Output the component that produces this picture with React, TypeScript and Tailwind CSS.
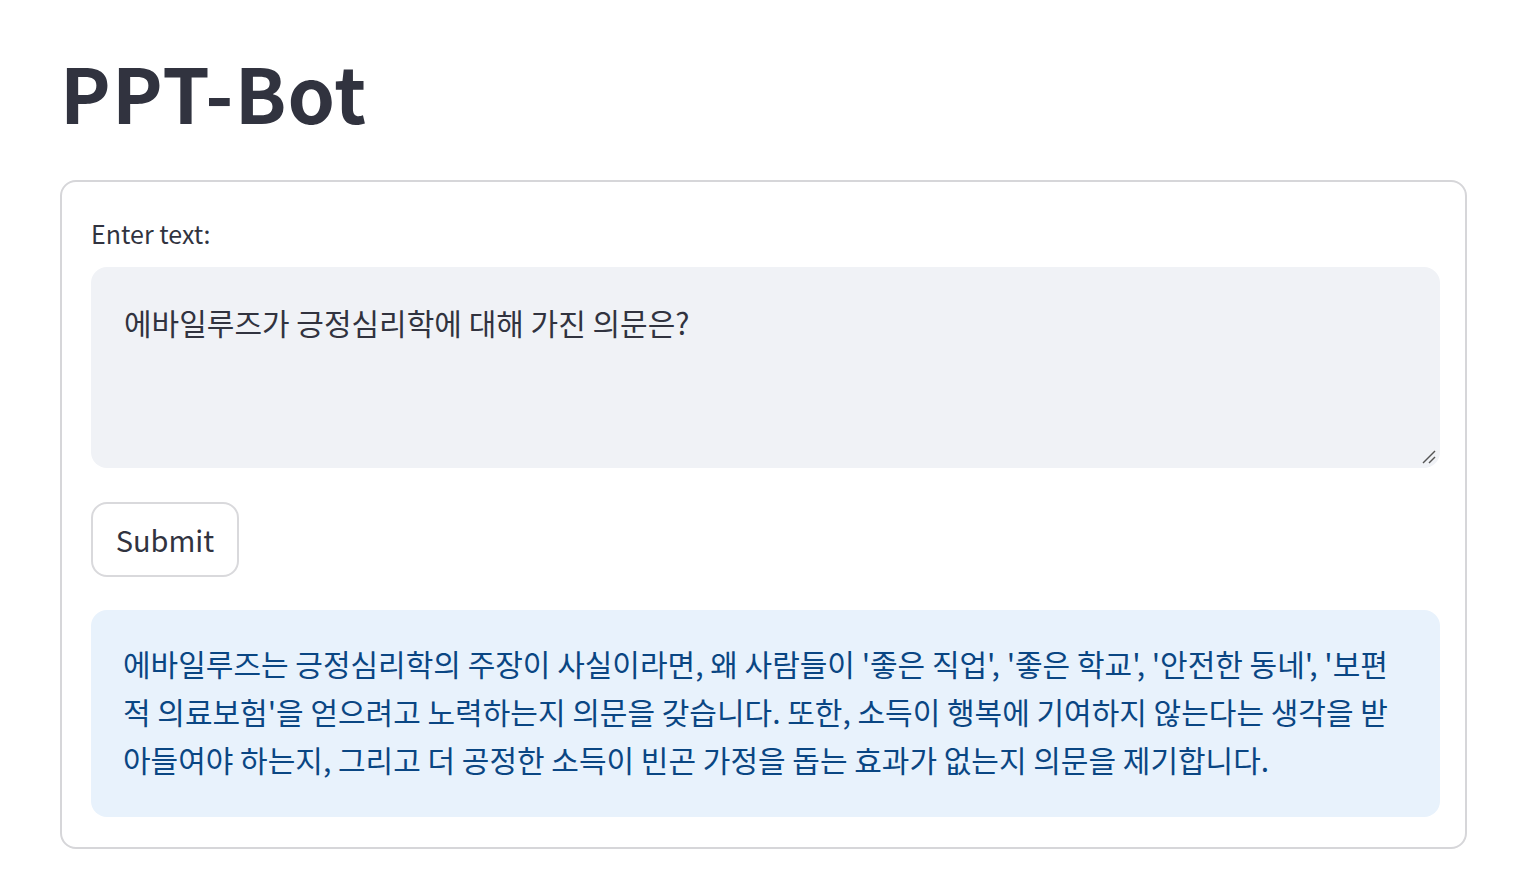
import React from "react";

const FONT = '"Noto Sans CJK KR", "Noto Sans", sans-serif';

export default function App() {
  return (
    <div className="min-h-[878px] bg-white text-[#31333f]" style={{ fontFamily: FONT }}>
      <div className="ml-[60px] w-[1407px] pt-[46px]">
        <h1 className="text-[76px] font-bold leading-[91px] tracking-[1.2px] text-[#31333f]">PPT-Bot</h1>
        <div className="mt-[43px] rounded-[16px] border-2 border-[#d6d6d9] pl-[29px] pr-[25px] pt-[35px] pb-[30px]">
          <label className="block text-[25px] leading-[32px] text-[#31333f]">Enter text:</label>
          <div className="relative mt-[18px] h-[201px] rounded-[16px] bg-[#f0f2f6]">
            <textarea
              className="block h-full w-full resize-none rounded-[16px] bg-transparent px-[33px] pt-[31px] text-[30px] leading-[48px] text-[#31333f] outline-none"
              style={{ fontFamily: FONT }}
              defaultValue="에바일루즈가 긍정심리학에 대해 가진 의문은?"
            />
            <svg className="pointer-events-none absolute bottom-[3px] right-[3px]" width="16" height="16" viewBox="0 0 16 16">
              <line x1="2" y1="14" x2="14" y2="2" stroke="#555" strokeWidth="1.5" />
              <line x1="8" y1="14" x2="14" y2="8" stroke="#555" strokeWidth="1.5" />
            </svg>
          </div>
          <button className="mt-[34px] flex h-[75px] w-[148px] items-center justify-center rounded-[16px] border-2 border-[#d9d9dc] bg-white text-[29px] text-[#31333f]">
            Submit
          </button>
          <div className="mt-[33px] rounded-[16px] bg-[#e8f2fc] px-[32px] pt-[29px] pb-[34px] text-[30px] leading-[48px] text-[#0a4683]">
            에바일루즈는 긍정심리학의 주장이 사실이라면, 왜 사람들이 '좋은 직업', '좋은 학교', '안전한 동네', '보편적 의료보험'을 얻으려고 노력하는지 의문을 갖습니다. 또한, 소득이 행복에 기여하지 않는다는 생각을 받아들여야 하는지, 그리고 더 공정한 소득이 빈곤 가정을 돕는 효과가 없는지 의문을 제기합니다.
          </div>
        </div>
      </div>
    </div>
  );
}
